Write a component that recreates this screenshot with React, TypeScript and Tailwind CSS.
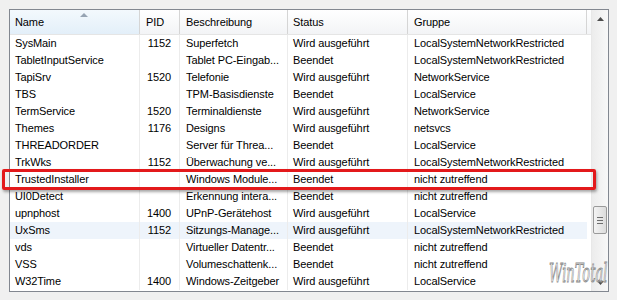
import React from "react";

interface Service {
  name: string;
  pid: string;
  desc: string;
  status: string;
  group: string;
}

const services: Service[] = [
  { name: "SysMain", pid: "1152", desc: "Superfetch", status: "Wird ausgeführt", group: "LocalSystemNetworkRestricted" },
  { name: "TabletInputService", pid: "", desc: "Tablet PC-Eingab...", status: "Beendet", group: "LocalSystemNetworkRestricted" },
  { name: "TapiSrv", pid: "1520", desc: "Telefonie", status: "Wird ausgeführt", group: "NetworkService" },
  { name: "TBS", pid: "", desc: "TPM-Basisdienste", status: "Beendet", group: "LocalService" },
  { name: "TermService", pid: "1520", desc: "Terminaldienste", status: "Wird ausgeführt", group: "NetworkService" },
  { name: "Themes", pid: "1176", desc: "Designs", status: "Wird ausgeführt", group: "netsvcs" },
  { name: "THREADORDER", pid: "", desc: "Server für Threa...", status: "Beendet", group: "LocalService" },
  { name: "TrkWks", pid: "1152", desc: "Überwachung ve...", status: "Wird ausgeführt", group: "LocalSystemNetworkRestricted" },
  { name: "TrustedInstaller", pid: "", desc: "Windows Module...", status: "Beendet", group: "nicht zutreffend" },
  { name: "UI0Detect", pid: "", desc: "Erkennung intera...", status: "Beendet", group: "nicht zutreffend" },
  { name: "upnphost", pid: "1400", desc: "UPnP-Gerätehost", status: "Wird ausgeführt", group: "LocalService" },
  { name: "UxSms", pid: "1152", desc: "Sitzungs-Manage...", status: "Wird ausgeführt", group: "LocalSystemNetworkRestricted" },
  { name: "vds", pid: "", desc: "Virtueller Datentr...", status: "Beendet", group: "nicht zutreffend" },
  { name: "VSS", pid: "", desc: "Volumeschattenk...", status: "Beendet", group: "nicht zutreffend" },
  { name: "W32Time", pid: "1400", desc: "Windows-Zeitgeber", status: "Wird ausgeführt", group: "LocalService" },
];

const cols = "grid grid-cols-[130px_40px_108px_120px_179px_4px]";

const App: React.FC = () => {
  return (
    <div
      className="relative w-[617px] h-[300px] bg-[#f0f0f0] pl-[9px] pt-[9px] overflow-hidden text-[11px] tracking-[-0.1px] text-black"
      style={{ fontFamily: "'Liberation Sans', Arial, sans-serif" }}
    >
      <div className="flex w-[600px] h-[283px] border border-[#828790] bg-white">
        {/* List area */}
        <div className="w-[581px] flex flex-col">
          {/* Header */}
          <div className={`${cols} h-[25px] bg-gradient-to-b from-white to-[#f3f4f6] border-b border-[#e5e5e5]`}>
            <div className="relative flex items-center pl-[5px] border-r border-[#d5d5d5] bg-gradient-to-b from-[#f3f9fd] to-[#e3eff9]">
              <svg className="absolute left-[70px] top-[2px]" width="8" height="5" viewBox="0 0 8 5">
                <path d="M0 5 L4 1 L8 5 Z" fill="#97a4b3" />
              </svg>
              Name
            </div>
            <div className="flex items-center pl-[6px] border-r border-[#d5d5d5]">PID</div>
            <div className="flex items-center pl-[6px] border-r border-[#d5d5d5]">Beschreibung</div>
            <div className="flex items-center pl-[5px] border-r border-[#d5d5d5]">Status</div>
            <div className="flex items-center pl-[6px] border-r border-[#d5d5d5]">Gruppe</div>
            <div />
          </div>
          {/* Rows */}
          <div className="flex flex-col">
            {services.map((s) => (
              <div
                key={s.name}
                className={`${cols} h-[17px] leading-[17px] ${s.name === "UxSms" ? "bg-[#eef4fb]" : ""}`}
              >
                <div className="pl-[5px] border-r border-[#ececec] whitespace-nowrap overflow-hidden">{s.name}</div>
                <div className="pr-[8px] text-right border-r border-[#ececec]">{s.pid}</div>
                <div className="pl-[6px] border-r border-[#ececec] whitespace-nowrap overflow-hidden">{s.desc}</div>
                <div className="pl-[5px] border-r border-[#ececec] whitespace-nowrap">{s.status}</div>
                <div className="pl-[6px] whitespace-nowrap">{s.group}</div>
                <div className="bg-white" />
              </div>
            ))}
          </div>
        </div>
        {/* Scrollbar */}
        <div className="w-[17px] flex flex-col border-l border-[#e8e8e8] bg-gradient-to-r from-[#ececec] to-[#f8f8f8]">
          <div className="h-[17px] flex items-center justify-center">
            <svg width="7" height="4" viewBox="0 0 7 4">
              <path d="M0 4 L3.5 0 L7 4 Z" fill="#4d4d4d" />
            </svg>
          </div>
          <div className="h-[179px]" />
          <div className="mx-[1px] h-[28px] rounded-[2px] border border-[#9a9a9a] bg-gradient-to-r from-[#f3f3f3] to-[#dcdcdc] flex flex-col items-center justify-center gap-[2px]">
            <div className="w-[6px] h-[1px] bg-[#6d6d6d]" />
            <div className="w-[6px] h-[1px] bg-[#6d6d6d]" />
            <div className="w-[6px] h-[1px] bg-[#6d6d6d]" />
          </div>
          <div className="flex-1" />
          <div className="h-[17px] flex items-center justify-center">
            <svg width="7" height="4" viewBox="0 0 7 4">
              <path d="M0 0 L3.5 4 L7 0 Z" fill="#4d4d4d" />
            </svg>
          </div>
        </div>
      </div>

      {/* Red highlight around TrustedInstaller */}
      <div className="absolute left-[2px] top-[169px] w-[594px] h-[21px] border-[3px] border-[#e3191b] rounded-[2px] shadow-[1px_2px_3px_rgba(0,0,0,0.35)]" />

      {/* Watermark */}
      <div
        className="absolute left-[549px] top-[258px] text-[26px] leading-[30px] italic tracking-[0px] text-[rgba(255,255,255,0.6)] origin-left scale-x-[0.5] whitespace-nowrap"
        style={{ fontFamily: "'DejaVu Serif', serif", WebkitTextStroke: "1px #8a8a8a" }}
      >
        WinTotal
      </div>
    </div>
  );
};

export default App;
